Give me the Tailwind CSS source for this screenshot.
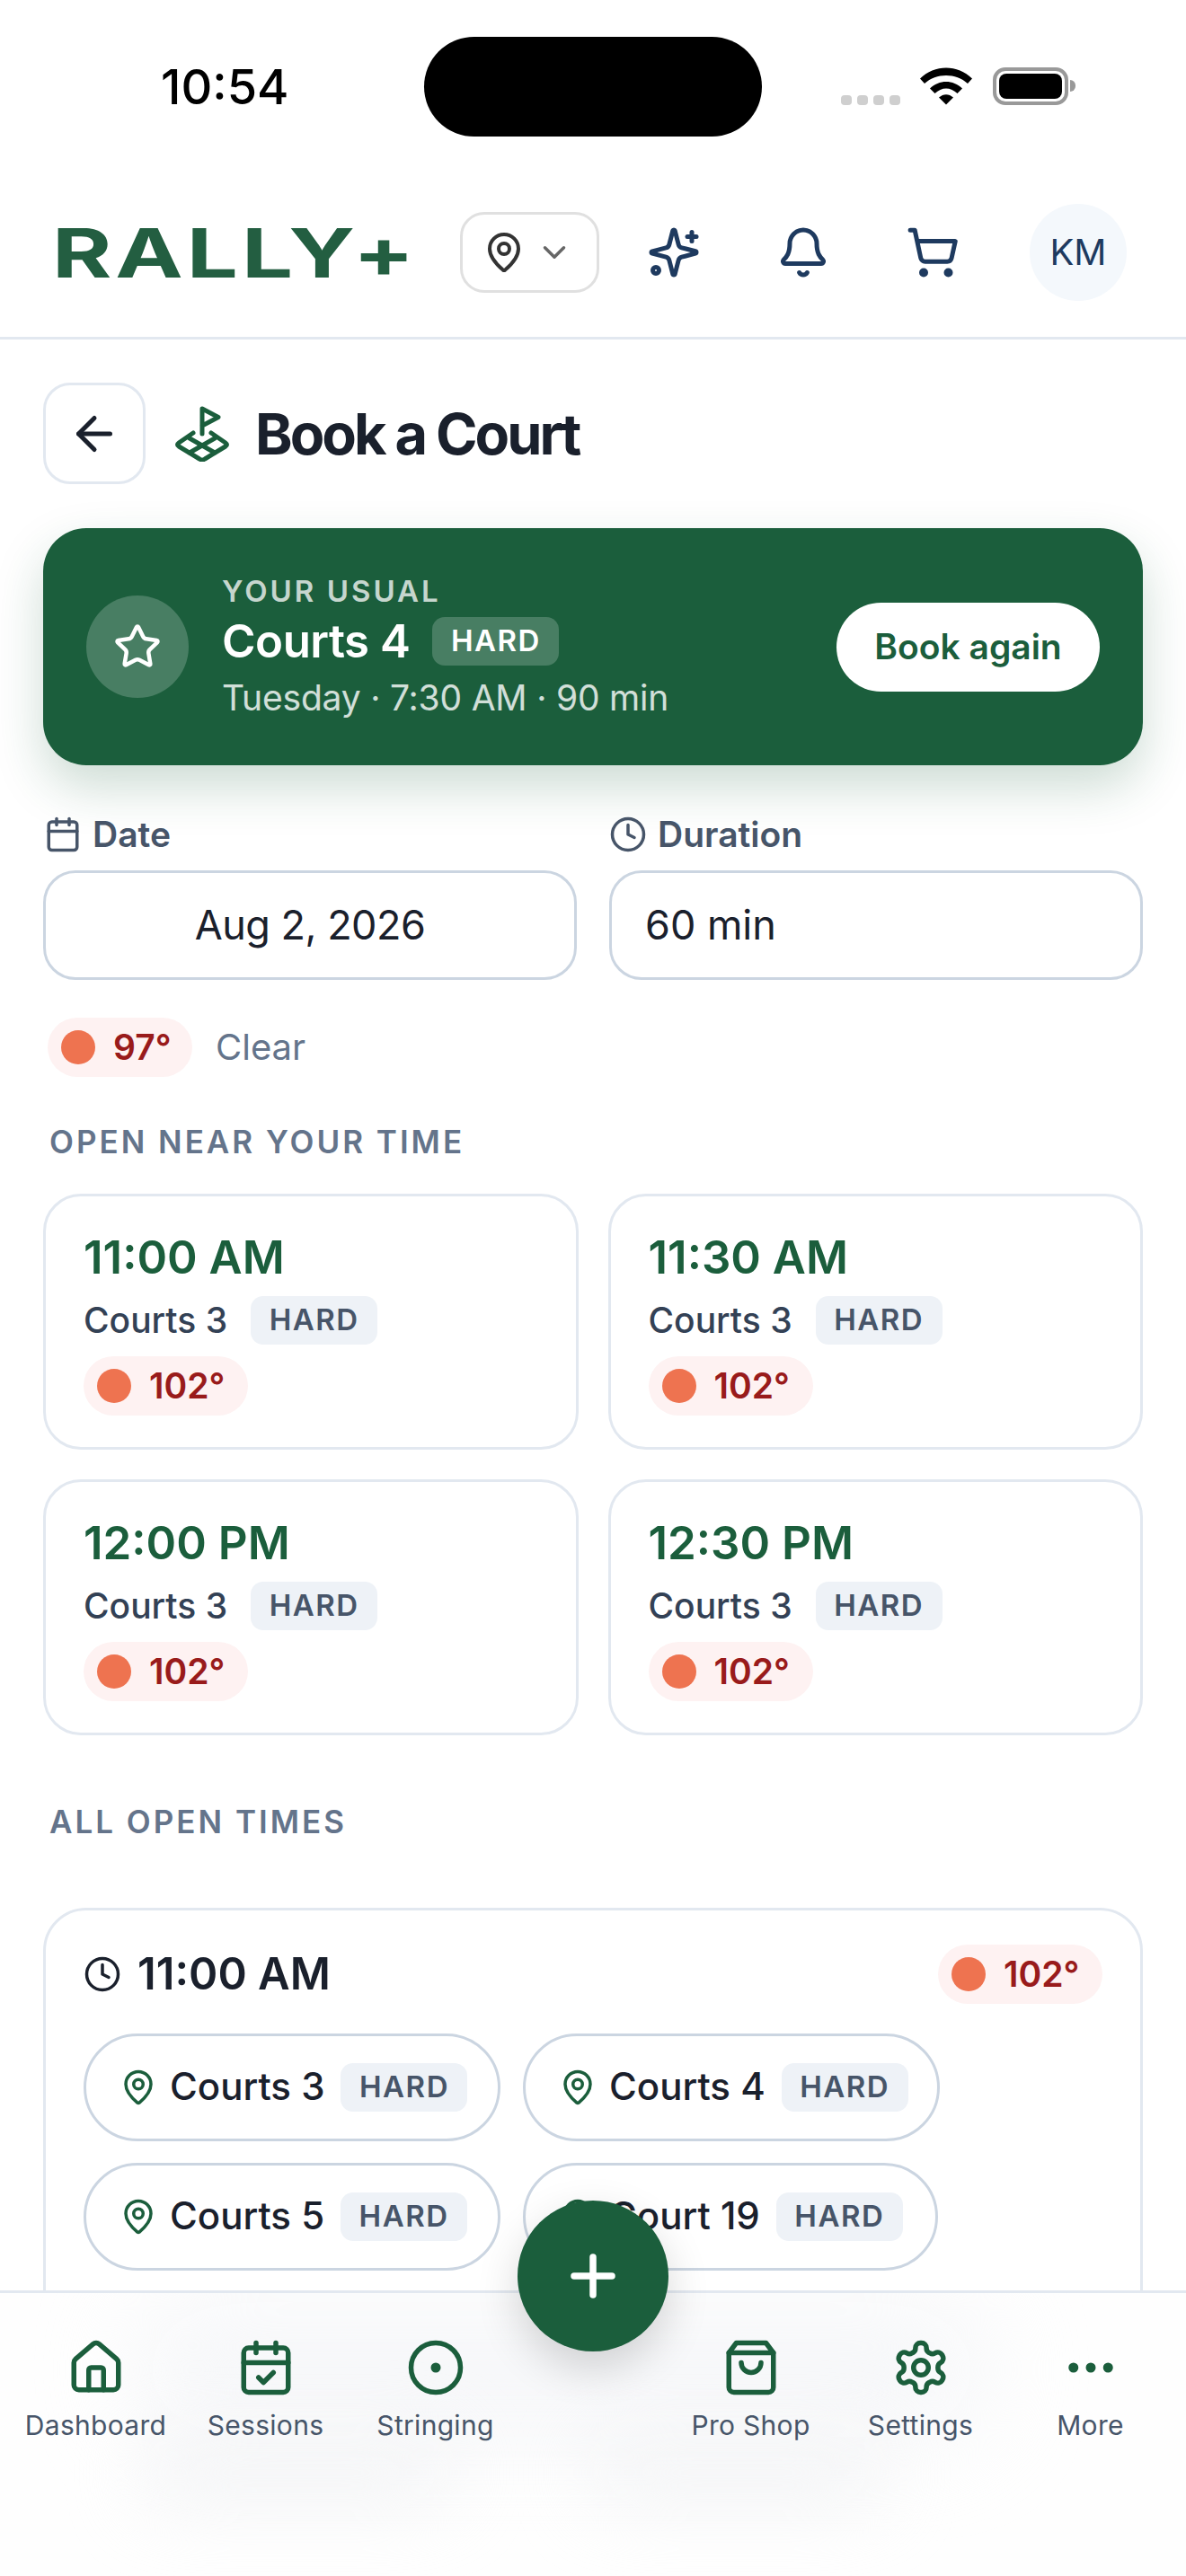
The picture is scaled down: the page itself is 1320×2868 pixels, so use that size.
<!DOCTYPE html>
<html><head><meta charset="utf-8">
<script src="https://cdn.jsdelivr.net/npm/@tailwindcss/browser@4"></script>
</head>
<body class="m-0 bg-white">
<div class="relative w-[1320px] h-[2868px] overflow-hidden bg-white font-[Inter,sans-serif] text-[#1a202c]">

  <!-- status bar -->
  <div class="relative h-[182px]">
    <span class="absolute left-[179px] top-[66px] text-[54px] leading-[62px] font-medium text-black">10:54</span>
    <div class="absolute left-[472px] top-[41px] w-[376px] h-[111px] rounded-full bg-black"></div>
    <div class="absolute left-[936px] top-[106px] flex gap-[6px]">
      <i class="block w-[12px] h-[11px] rounded-[4px] bg-[#cfcfcf]"></i><i class="block w-[12px] h-[11px] rounded-[4px] bg-[#cfcfcf]"></i><i class="block w-[12px] h-[11px] rounded-[4px] bg-[#cfcfcf]"></i><i class="block w-[12px] h-[11px] rounded-[4px] bg-[#cfcfcf]"></i>
    </div>
    <svg class="absolute left-[1024px] top-[75px]" width="58" height="42" viewBox="0 0 58 42" fill="#000"><path d="M0 12.5C16 -3.5 42 -3.5 58 12.5L53 18C40 6 18 6 5 18Z"/><path d="M11 23.5C21 13.5 37 13.5 47 23.5L41.5 29C34 21.5 24 21.5 16.500 29Z"/><path d="M21 33.500C26 29 32 29 37 33.500L29 41.500Z"/></svg>
    <div class="absolute left-[1105px] top-[75px] w-[84px] h-[42px] rounded-[14px] border-[4px] border-[#999] bg-white p-[3px]"><div class="w-full h-full rounded-[8px] bg-black"></div></div>
    <div class="absolute left-[1191px] top-[89px] w-[6px] h-[13px] rounded-r-[6px] bg-[#999]"></div>
  </div>

  <!-- header -->
  <header class="flex items-center h-[196px] border-b-[3px] border-[#e2e8f0] pt-[5px] pl-[58px]">
    <div class="w-[454px] h-[60px] flex items-center">
      <span class="block origin-left scale-x-[1.33] text-[76px] leading-none font-bold tracking-[3px] text-[#235e41] whitespace-nowrap">RALLY+</span>
    </div>
    <button class="flex items-center w-[155px] h-[90px] rounded-[27px] border-[3px] border-[#e0e0e0] pl-[22px] gap-[11px]">
      <svg width="48" height="48" viewBox="0 0 24 24" fill="none" stroke="#333" stroke-width="2" stroke-linecap="round" stroke-linejoin="round"><path d="M20 10c0 4.993-5.539 10.193-7.399 11.799a1 1 0 0 1-1.202 0C9.539 20.193 4 14.993 4 10a8 8 0 0 1 16 0"/><circle cx="12" cy="10" r="3"/></svg>
      <svg width="42" height="42" viewBox="0 0 24 24" fill="none" stroke="#666" stroke-width="2" stroke-linecap="round" stroke-linejoin="round"><path d="m6 9 6 6 6-6"/></svg>
    </button>
    <div class="ml-[11px] w-[144px] flex justify-center">
      <svg width="60" height="60" viewBox="0 0 24 24" fill="none" stroke="#1e3a5f" stroke-width="2" stroke-linecap="round" stroke-linejoin="round"><path d="M9.937 15.500A2 2 0 0 0 8.500 14.063l-6.135-1.582a.5.5 0 0 1 0-.962L8.500 9.936A2 2 0 0 0 9.937 8.500l1.582-6.135a.5.5 0 0 1 .963 0L14.063 8.500A2 2 0 0 0 15.500 9.937l6.135 1.581a.5.5 0 0 1 0 .964L15.500 14.063a2 2 0 0 0-1.437 1.437l-1.582 6.135a.5.5 0 0 1-.963 0z"/><path d="M20 3v4"/><path d="M22 5h-4"/><circle cx="4" cy="20" r="1.400"/></svg>
    </div>
    <div class="w-[144px] flex justify-center">
      <svg width="60" height="60" viewBox="0 0 24 24" fill="none" stroke="#1e3a5f" stroke-width="2" stroke-linecap="round" stroke-linejoin="round"><path d="M10.268 21a2 2 0 0 0 3.464 0"/><path d="M3.262 15.326A1 1 0 0 0 4 17h16a1 1 0 0 0 .74-1.673C19.410 13.956 18 12.499 18 8A6 6 0 0 0 6 8c0 4.499-1.411 5.956-2.738 7.326"/></svg>
    </div>
    <div class="w-[144px] flex justify-center">
      <svg width="60" height="60" viewBox="0 0 24 24" fill="none" stroke="#1e3a5f" stroke-width="2" stroke-linecap="round" stroke-linejoin="round"><circle cx="8" cy="21" r="1"/><circle cx="19" cy="21" r="1"/><path d="M2.050 2.050h2l2.660 12.420a2 2 0 0 0 2 1.580h9.780a2 2 0 0 0 1.950-1.570l1.650-7.430H5.120"/></svg>
    </div>
    <div class="ml-[36px] w-[108px] h-[108px] rounded-full bg-[#f4f8fc] flex items-center justify-center text-[40px] text-[#1e3a5f]">KM</div>
  </header>

  <main class="px-[48px] flex flex-col">
    <!-- title -->
    <div class="mt-[48px] flex items-center h-[113px]">
      <button class="w-[114px] h-[113px] rounded-[30px] border-[3px] border-[#e2e8f0] flex items-center justify-center">
        <svg width="60" height="60" viewBox="0 0 24 24" fill="none" stroke="#1a202c" stroke-width="2" stroke-linecap="round" stroke-linejoin="round"><path d="m12 19-7-7 7-7"/><path d="M19 12H5"/></svg>
      </button>
      <svg class="ml-[32px]" width="62" height="62" viewBox="0 0 62 62" fill="none" stroke="#1b5e3c" stroke-width="5" stroke-linecap="round" stroke-linejoin="round"><path d="M31 31V3L49 12.500L31 22"/><path d="M21 30L5 41Q2 43 5 45L28 59Q31 61 34 59L57 45Q60 43 57 41L41 30"/><path d="M17 36L45 52"/><path d="M45 36L17 52"/></svg>
      <h1 class="ml-[28px] text-[63px] leading-[72px] font-bold tracking-[-3px] text-[#1a202c]">Book a Court</h1>
    </div>

    <!-- your usual -->
    <section class="mt-[49px] h-[264px] rounded-[48px] bg-[#1b5e3c] shadow-[0_24px_54px_rgba(27,94,60,0.22)] flex items-center pl-[48px] pr-[48px]">
      <div class="w-[114px] h-[114px] rounded-full bg-white/20 flex items-center justify-center">
        <svg width="54" height="54" viewBox="0 0 24 24" fill="none" stroke="#fff" stroke-width="2" stroke-linecap="round" stroke-linejoin="round"><path d="M11.525 2.295a.530.530 0 0 1 .950 0l2.310 4.679a2.123 2.123 0 0 0 1.595 1.160l5.166.756a.530.530 0 0 1 .294.904l-3.736 3.638a2.123 2.123 0 0 0-.611 1.878l.882 5.140a.530.530 0 0 1-.771.560l-4.618-2.428a2.122 2.122 0 0 0-1.973 0L6.396 21.010a.530.530 0 0 1-.770-.560l.881-5.139a2.122 2.122 0 0 0-.611-1.879L2.160 9.795a.530.530 0 0 1 .294-.906l5.165-.755a2.122 2.122 0 0 0 1.597-1.160z"/></svg>
      </div>
      <div class="ml-[37px] flex-1">
        <div class="text-[33px] leading-[36px] font-semibold tracking-[3px] text-white/75">YOUR USUAL</div>
        <div class="mt-[11px] flex items-center h-[54px]">
          <span class="text-[51px] leading-[54px] font-semibold tracking-[-0.500px] text-white">Courts 4</span>
          <span class="ml-[25px] w-[141px] h-[54px] rounded-[14px] bg-white/20 flex items-center justify-center text-[33px] font-semibold tracking-[1.500px] text-white">HARD</span>
        </div>
        <div class="mt-[12px] text-[39px] leading-[48px] tracking-[-0.200px] text-white/80 whitespace-nowrap">Tuesday · 7:30 AM · 90 min</div>
      </div>
      <button class="w-[293px] h-[99px] rounded-full bg-white text-[39px] font-semibold text-[#1b5e3c]">Book again</button>
    </section>

    <!-- date and duration -->
    <div class="mt-[53px] grid grid-cols-2 gap-x-[36px]">
      <div>
        <div class="flex items-center h-[48px] text-[#475569] text-[39px] font-semibold pl-[1px] gap-[12px]">
          <svg width="42" height="42" viewBox="0 0 24 24" fill="none" stroke="#475569" stroke-width="2" stroke-linecap="round" stroke-linejoin="round"><path d="M8 2v4"/><path d="M16 2v4"/><rect width="18" height="18" x="3" y="4" rx="2"/><path d="M3 10h18"/></svg>
          Date
        </div>
        <div class="mt-[16px] h-[122px] rounded-[36px] border-[3px] border-[#cbd5e1] flex items-center justify-center text-[45px] tracking-[-0.500px]">Aug 2, 2026</div>
      </div>
      <div>
        <div class="flex items-center h-[48px] text-[#475569] text-[39px] font-semibold gap-[12px]">
          <svg width="42" height="42" viewBox="0 0 24 24" fill="none" stroke="#475569" stroke-width="2" stroke-linecap="round" stroke-linejoin="round"><circle cx="12" cy="12" r="10"/><path d="M12 6v6l4 2"/></svg>
          Duration
        </div>
        <div class="mt-[16px] h-[122px] rounded-[36px] border-[3px] border-[#cbd5e1] flex items-center pl-[37px] text-[45px]">60 min</div>
      </div>
    </div>

    <!-- weather -->
    <div class="mt-[42px] ml-[5px] flex items-center gap-[26px]">
      <span class="flex items-center w-[161px] h-[66px] rounded-full bg-[#fef2f2] pl-[15px] gap-[20px] text-[39px] font-semibold text-[#991b1b]"><i class="block w-[38px] h-[38px] rounded-full bg-[#ee7350]"></i>97°</span>
      <span class="text-[40px] text-[#64748b]">Clear</span>
    </div>

    <h2 class="mt-[50px] ml-[7px] text-[35px] leading-[44px] font-semibold tracking-[3px] text-[#64748b]">OPEN NEAR YOUR TIME</h2>

    <div class="mt-[36px] grid grid-cols-2 gap-[33px]">
      <div class="h-[285px] rounded-[42px] border-[3px] border-[#e2e8f0] pl-[42px] pt-[32px]">
        <div class="text-[51px] leading-[72px] font-semibold text-[#1b5e3c]">11:00 AM</div>
        <div class="mt-[8px] flex items-center h-[52px]"><span class="text-[39px] font-medium text-[#334155]">Courts 3</span><span class="ml-[26px] w-[141px] h-[54px] rounded-[14px] bg-[#eef2f7] flex items-center justify-center text-[33px] font-semibold tracking-[1.500px] text-[#475569]">HARD</span></div>
        <span class="mt-[14px] flex items-center w-[183px] h-[66px] rounded-full bg-[#fef2f2] pl-[15px] gap-[20px] text-[39px] font-semibold text-[#991b1b]"><i class="block w-[38px] h-[38px] rounded-full bg-[#ee7350]"></i>102°</span>
      </div>
      <div class="h-[285px] rounded-[42px] border-[3px] border-[#e2e8f0] pl-[42px] pt-[32px]">
        <div class="text-[51px] leading-[72px] font-semibold text-[#1b5e3c]">11:30 AM</div>
        <div class="mt-[8px] flex items-center h-[52px]"><span class="text-[39px] font-medium text-[#334155]">Courts 3</span><span class="ml-[26px] w-[141px] h-[54px] rounded-[14px] bg-[#eef2f7] flex items-center justify-center text-[33px] font-semibold tracking-[1.500px] text-[#475569]">HARD</span></div>
        <span class="mt-[14px] flex items-center w-[183px] h-[66px] rounded-full bg-[#fef2f2] pl-[15px] gap-[20px] text-[39px] font-semibold text-[#991b1b]"><i class="block w-[38px] h-[38px] rounded-full bg-[#ee7350]"></i>102°</span>
      </div>
      <div class="h-[285px] rounded-[42px] border-[3px] border-[#e2e8f0] pl-[42px] pt-[32px]">
        <div class="text-[51px] leading-[72px] font-semibold text-[#1b5e3c]">12:00 PM</div>
        <div class="mt-[8px] flex items-center h-[52px]"><span class="text-[39px] font-medium text-[#334155]">Courts 3</span><span class="ml-[26px] w-[141px] h-[54px] rounded-[14px] bg-[#eef2f7] flex items-center justify-center text-[33px] font-semibold tracking-[1.500px] text-[#475569]">HARD</span></div>
        <span class="mt-[14px] flex items-center w-[183px] h-[66px] rounded-full bg-[#fef2f2] pl-[15px] gap-[20px] text-[39px] font-semibold text-[#991b1b]"><i class="block w-[38px] h-[38px] rounded-full bg-[#ee7350]"></i>102°</span>
      </div>
      <div class="h-[285px] rounded-[42px] border-[3px] border-[#e2e8f0] pl-[42px] pt-[32px]">
        <div class="text-[51px] leading-[72px] font-semibold text-[#1b5e3c]">12:30 PM</div>
        <div class="mt-[8px] flex items-center h-[52px]"><span class="text-[39px] font-medium text-[#334155]">Courts 3</span><span class="ml-[26px] w-[141px] h-[54px] rounded-[14px] bg-[#eef2f7] flex items-center justify-center text-[33px] font-semibold tracking-[1.500px] text-[#475569]">HARD</span></div>
        <span class="mt-[14px] flex items-center w-[183px] h-[66px] rounded-full bg-[#fef2f2] pl-[15px] gap-[20px] text-[39px] font-semibold text-[#991b1b]"><i class="block w-[38px] h-[38px] rounded-full bg-[#ee7350]"></i>102°</span>
      </div>
    </div>

    <h2 class="mt-[74px] ml-[7px] text-[35px] leading-[44px] font-semibold tracking-[3px] text-[#64748b]">ALL OPEN TIMES</h2>

    <section class="mt-[74px] h-[560px] rounded-[48px] border-[3px] border-[#e2e8f0] pl-[42px] pr-[42px] pt-[38px]">
      <div class="flex items-center justify-between h-[66px]">
        <div class="flex items-center gap-[18px]">
          <svg width="42" height="42" viewBox="0 0 24 24" fill="none" stroke="#1a202c" stroke-width="2" stroke-linecap="round" stroke-linejoin="round"><circle cx="12" cy="12" r="10"/><path d="M12 6v6l4 2"/></svg>
          <span class="text-[49px] font-semibold">11:00 AM</span>
        </div>
        <span class="flex items-center w-[183px] h-[66px] rounded-full bg-[#fef2f2] pl-[15px] gap-[20px] text-[39px] font-semibold text-[#991b1b]"><i class="block w-[38px] h-[38px] rounded-full bg-[#ee7350]"></i>102°</span>
      </div>
      <div class="mt-[33px] flex flex-wrap gap-x-[25px] gap-y-[24px]">
        <div class="flex items-center w-[464px] h-[120px] rounded-full border-[3px] border-[#cbd5e1] pl-[37px]">
          <svg width="42" height="42" viewBox="0 0 24 24" fill="none" stroke="#1b5e3c" stroke-width="2" stroke-linecap="round" stroke-linejoin="round"><path d="M20 10c0 4.993-5.539 10.193-7.399 11.799a1 1 0 0 1-1.202 0C9.539 20.193 4 14.993 4 10a8 8 0 0 1 16 0"/><circle cx="12" cy="10" r="3"/></svg>
          <span class="ml-[14px] -mt-[3px] text-[42px] font-medium">Courts 3</span>
          <span class="ml-[18px] w-[141px] h-[54px] rounded-[14px] bg-[#eef2f7] flex items-center justify-center text-[33px] font-semibold tracking-[1.500px] text-[#475569]">HARD</span>
        </div>
        <div class="flex items-center w-[464px] h-[120px] rounded-full border-[3px] border-[#cbd5e1] pl-[37px]">
          <svg width="42" height="42" viewBox="0 0 24 24" fill="none" stroke="#1b5e3c" stroke-width="2" stroke-linecap="round" stroke-linejoin="round"><path d="M20 10c0 4.993-5.539 10.193-7.399 11.799a1 1 0 0 1-1.202 0C9.539 20.193 4 14.993 4 10a8 8 0 0 1 16 0"/><circle cx="12" cy="10" r="3"/></svg>
          <span class="ml-[14px] -mt-[3px] text-[42px] font-medium">Courts 4</span>
          <span class="ml-[18px] w-[141px] h-[54px] rounded-[14px] bg-[#eef2f7] flex items-center justify-center text-[33px] font-semibold tracking-[1.500px] text-[#475569]">HARD</span>
        </div>
        <div class="flex items-center w-[464px] h-[120px] rounded-full border-[3px] border-[#cbd5e1] pl-[37px]">
          <svg width="42" height="42" viewBox="0 0 24 24" fill="none" stroke="#1b5e3c" stroke-width="2" stroke-linecap="round" stroke-linejoin="round"><path d="M20 10c0 4.993-5.539 10.193-7.399 11.799a1 1 0 0 1-1.202 0C9.539 20.193 4 14.993 4 10a8 8 0 0 1 16 0"/><circle cx="12" cy="10" r="3"/></svg>
          <span class="ml-[14px] -mt-[3px] text-[42px] font-medium">Courts 5</span>
          <span class="ml-[18px] w-[141px] h-[54px] rounded-[14px] bg-[#eef2f7] flex items-center justify-center text-[33px] font-semibold tracking-[1.500px] text-[#475569]">HARD</span>
        </div>
        <div class="flex items-center w-[462px] h-[120px] rounded-full border-[3px] border-[#cbd5e1] pl-[37px]">
          <svg width="42" height="42" viewBox="0 0 24 24" fill="none" stroke="#1b5e3c" stroke-width="2" stroke-linecap="round" stroke-linejoin="round"><path d="M20 10c0 4.993-5.539 10.193-7.399 11.799a1 1 0 0 1-1.202 0C9.539 20.193 4 14.993 4 10a8 8 0 0 1 16 0"/><circle cx="12" cy="10" r="3"/></svg>
          <span class="ml-[14px] -mt-[3px] text-[42px] font-medium">Court 19</span>
          <span class="ml-[18px] w-[141px] h-[54px] rounded-[14px] bg-[#eef2f7] flex items-center justify-center text-[33px] font-semibold tracking-[1.500px] text-[#475569]">HARD</span>
        </div>
      </div>
    </section>
  </main>

  <!-- bottom nav -->
  <nav class="absolute left-0 right-0 bottom-0 h-[318px] overflow-hidden border-t-[3px] border-[#e2e8f0] bg-[#fefefe]">
    <div class="absolute left-[150px] top-[10px] w-[950px] h-[150px] rounded-full bg-[#f6f7f9] blur-[50px]"></div>
    <div class="absolute left-[160px] top-[170px] w-[340px] h-[60px] rounded-full bg-[#f2f3f5] blur-[40px]"></div>
    <div class="absolute left-[660px] top-[170px] w-[320px] h-[60px] rounded-full bg-[#f2f3f5] blur-[40px]"></div>
    <div class="relative flex px-[12px] pt-[50px]">
      <div class="w-[189px] flex flex-col items-center">
        <svg width="66" height="66" viewBox="0 0 24 24" fill="none" stroke="#1b5e3c" stroke-width="2" stroke-linecap="round" stroke-linejoin="round"><path d="M15 21v-8a1 1 0 0 0-1-1h-4a1 1 0 0 0-1 1v8"/><path d="M3 10a2 2 0 0 1 .709-1.528l7-5.999a2 2 0 0 1 2.582 0l7 5.999A2 2 0 0 1 21 10v9a2 2 0 0 1-2 2H5a2 2 0 0 1-2-2z"/></svg>
        <span class="mt-[9px] text-[30px] leading-[44px] tracking-[0.300px] text-[#475569]">Dashboard</span>
      </div>
      <div class="w-[189px] flex flex-col items-center">
        <svg width="66" height="66" viewBox="0 0 24 24" fill="none" stroke="#1b5e3c" stroke-width="2" stroke-linecap="round" stroke-linejoin="round"><path d="M8 2v4"/><path d="M16 2v4"/><rect width="18" height="18" x="3" y="4" rx="2"/><path d="M3 10h18"/><path d="m9 16 2 2 4-4"/></svg>
        <span class="mt-[9px] text-[30px] leading-[44px] tracking-[0.300px] text-[#475569]">Sessions</span>
      </div>
      <div class="w-[189px] flex flex-col items-center">
        <svg width="66" height="66" viewBox="0 0 24 24" fill="none" stroke="#1b5e3c" stroke-width="2" stroke-linecap="round" stroke-linejoin="round"><circle cx="12" cy="12" r="10"/><circle cx="12" cy="12" r="1"/></svg>
        <span class="mt-[9px] text-[30px] leading-[44px] tracking-[0.300px] text-[#475569]">Stringing</span>
      </div>
      <div class="flex-1"></div>
      <div class="w-[189px] flex flex-col items-center">
        <svg width="66" height="66" viewBox="0 0 24 24" fill="none" stroke="#1b5e3c" stroke-width="2" stroke-linecap="round" stroke-linejoin="round"><path d="M6 2 3 6v14a2 2 0 0 0 2 2h14a2 2 0 0 0 2-2V6l-3-4Z"/><path d="M3 6h18"/><path d="M16 10a4 4 0 0 1-8 0"/></svg>
        <span class="mt-[9px] text-[30px] leading-[44px] tracking-[0.300px] text-[#475569]">Pro Shop</span>
      </div>
      <div class="w-[189px] flex flex-col items-center">
        <svg width="66" height="66" viewBox="0 0 24 24" fill="none" stroke="#1b5e3c" stroke-width="2" stroke-linecap="round" stroke-linejoin="round"><path d="M12.220 2h-.44a2 2 0 0 0-2 2v.18a2 2 0 0 1-1 1.730l-.43.25a2 2 0 0 1-2 0l-.15-.08a2 2 0 0 0-2.730.73l-.22.38a2 2 0 0 0 .73 2.730l.15.1a2 2 0 0 1 1 1.720v.51a2 2 0 0 1-1 1.740l-.15.09a2 2 0 0 0-.73 2.730l.22.38a2 2 0 0 0 2.730.73l.15-.08a2 2 0 0 1 2 0l.43.25a2 2 0 0 1 1 1.730V20a2 2 0 0 0 2 2h.44a2 2 0 0 0 2-2v-.18a2 2 0 0 1 1-1.730l.43-.25a2 2 0 0 1 2 0l.15.08a2 2 0 0 0 2.730-.73l.22-.39a2 2 0 0 0-.73-2.730l-.15-.08a2 2 0 0 1-1-1.740v-.5a2 2 0 0 1 1-1.740l.15-.09a2 2 0 0 0 .73-2.730l-.22-.38a2 2 0 0 0-2.730-.73l-.15.08a2 2 0 0 1-2 0l-.43-.25a2 2 0 0 1-1-1.730V4a2 2 0 0 0-2-2z"/><circle cx="12" cy="12" r="3"/></svg>
        <span class="mt-[9px] text-[30px] leading-[44px] tracking-[0.300px] text-[#475569]">Settings</span>
      </div>
      <div class="w-[189px] flex flex-col items-center">
        <svg width="66" height="66" viewBox="0 0 24 24" fill="none" stroke="#1b5e3c" stroke-width="2" stroke-linecap="round" stroke-linejoin="round"><circle cx="12" cy="12" r="1"/><circle cx="19" cy="12" r="1"/><circle cx="5" cy="12" r="1"/></svg>
        <span class="mt-[9px] text-[30px] leading-[44px] tracking-[0.300px] text-[#475569]">More</span>
      </div>
    </div>
  </nav>

  <!-- add button -->
  <button class="absolute left-[576px] top-[2450px] w-[168px] h-[168px] rounded-full bg-[#1b5e3c] shadow-[0_18px_48px_rgba(0,0,0,0.16)] flex items-center justify-center">
    <svg width="72" height="72" viewBox="0 0 24 24" fill="none" stroke="#fff" stroke-width="2.500" stroke-linecap="round" stroke-linejoin="round"><path d="M5 12h14"/><path d="M12 5v14"/></svg>
  </button>
</div>
</body></html>
